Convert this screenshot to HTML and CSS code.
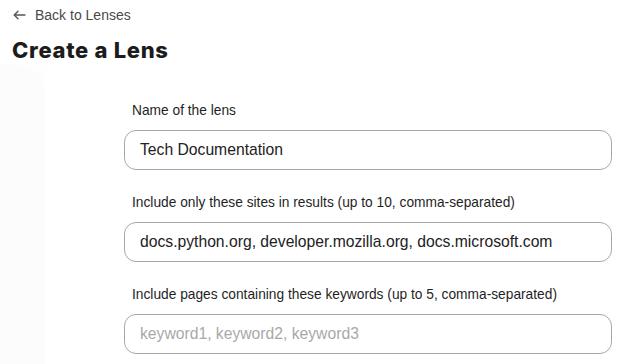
FILE: index.html
```html
<!DOCTYPE html>
<html lang="en">
<head>
    <meta charset="UTF-8">
    <meta name="viewport" content="width=device-width, initial-scale=1.0">
    <title>Create a Lens</title>
    <link rel="stylesheet" href="styles.css">
</head>
<body>
    <!-- top bar -->
    <header class="page-head">
        <a class="back-link" href="#">
            <svg class="back-icon" width="13" height="10" viewBox="0 0 13 10" fill="none" stroke="currentColor" stroke-width="1.4" stroke-linecap="round" stroke-linejoin="round">
                <path d="M12 5H1.5"/>
                <path d="M5 1.2L1.2 5L5 8.8"/>
            </svg>
            <span>Back to Lenses</span>
        </a>
        <h1 class="page-title">Create a Lens</h1>
    </header>

    <div class="layout">
        <aside class="side-strip"></aside>

        <main class="content">
            <form class="lens-form">
                <div class="field">
                    <label for="lens-name">Name of the lens</label>
                    <input id="lens-name" type="text" value="Tech Documentation">
                </div>

                <div class="field">
                    <label for="lens-sites">Include only these sites in results (up to 10, comma-separated)</label>
                    <input id="lens-sites" type="text" value="docs.python.org, developer.mozilla.org, docs.microsoft.com">
                </div>

                <div class="field">
                    <label for="lens-keywords">Include pages containing these keywords (up to 5, comma-separated)</label>
                    <input id="lens-keywords" type="text" placeholder="keyword1, keyword2, keyword3">
                </div>
            </form>
        </main>
    </div>
</body>
</html>
```

FILE: styles.css
```css
/* base */
* {
    margin: 0;
    padding: 0;
    box-sizing: border-box;
}

body {
    font-family: "Liberation Sans", Arial, sans-serif;
    background: #fefefe;
    color: #222222;
    overflow: hidden;
    height: 364px;
    display: flex;
    flex-direction: column;
}

/* header */
.page-head {
    padding: 6px 10px 0 10px;
    background: #ffffff;
}

.back-link {
    display: flex;
    align-items: center;
    gap: 9px;
    height: 18px;
    padding-left: 3px;
    font-size: 14px;
    color: #4a4a4a;
    text-decoration: none;
}

.back-icon {
    color: #555555;
}

.page-title {
    margin-top: 12px;
    padding-left: 2px;
    font-family: Inter, "Liberation Sans", sans-serif;
    font-weight: 800;
    font-size: 22px;
    line-height: 28px;
    color: #1c1c1c;
    letter-spacing: 0.7px;
}

/* body area */
.layout {
    flex: 1;
    display: flex;
    margin-top: 1px;
}

.side-strip {
    width: 45px;
    background: #fcfcfc;
    border-top-right-radius: 28px;
}

.content {
    flex: 1;
    background: #ffffff;
    padding: 37px 18px 0 79px;
}

/* form */
.field {
    margin-bottom: 24px;
}

.field label {
    display: block;
    font-size: 13.75px;
    line-height: 18px;
    margin-bottom: 10px;
    padding-left: 8px;
    color: #1f1f1f;
}

.field input {
    display: block;
    width: 100%;
    height: 40px;
    padding: 0 15px;
    border: 1px solid #a8a8a8;
    border-radius: 12px;
    background: #ffffff;
    font-family: "Liberation Sans", Arial, sans-serif;
    font-size: 15.7px;
    color: #222222;
    outline: none;
}

.field input::placeholder {
    color: #a9a9a9;
}
```
